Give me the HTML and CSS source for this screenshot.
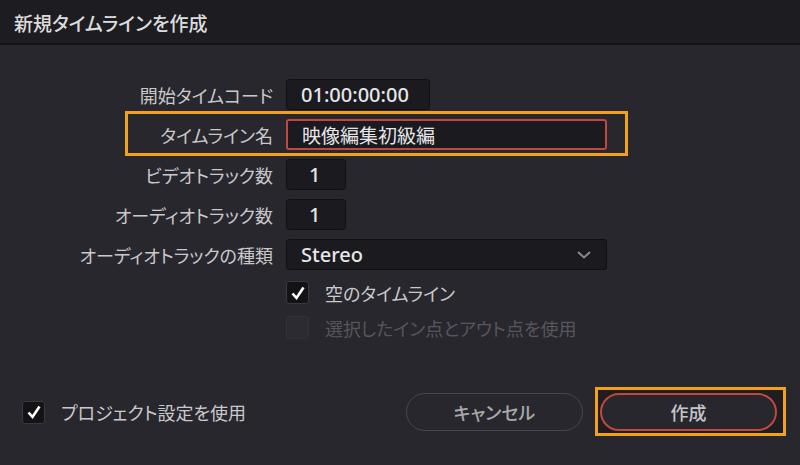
FILE: index.html
```html
<!DOCTYPE html>
<html lang="ja">
<head>
    <meta charset="UTF-8">
    <title>新規タイムラインを作成</title>
    <link rel="stylesheet" href="styles.css">
</head>
<body>

    <div class="titlebar">新規タイムラインを作成</div>

    <div class="form">
        <div class="row">
            <label class="label">開始タイムコード</label>
            <div class="field field-code">01:00:00:00</div>
        </div>

        <div class="row">
            <div class="mark mark-name"></div>
            <label class="label">タイムライン名</label>
            <div class="field field-name">映像編集初級編</div>
        </div>

        <div class="row">
            <label class="label">ビデオトラック数</label>
            <div class="field field-num">1</div>
        </div>

        <div class="row">
            <label class="label">オーディオトラック数</label>
            <div class="field field-num">1</div>
        </div>

        <div class="row">
            <label class="label">オーディオトラックの種類</label>
            <div class="field field-select">
                <span>Stereo</span>
                <svg class="chevron" width="14" height="8" viewBox="0 0 14 8">
                    <path d="M1 1 L7 6.5 L13 1" fill="none" stroke="#8a8a8e" stroke-width="2"/>
                </svg>
            </div>
        </div>

        <div class="check-row">
            <span class="box checked">
                <svg width="16" height="16" viewBox="0 0 16 16">
                    <path d="M2.5 8.5 L6.5 13 L13.5 2.5" fill="none" stroke="#fff" stroke-width="2.6"/>
                </svg>
            </span>
            <span class="check-text">空のタイムライン</span>
        </div>

        <div class="check-row disabled">
            <span class="box"></span>
            <span class="check-text">選択したイン点とアウト点を使用</span>
        </div>
    </div>

    <div class="footer">
        <div class="check-row footer-check">
            <span class="box checked">
                <svg width="16" height="16" viewBox="0 0 16 16">
                    <path d="M2.5 8.5 L6.5 13 L13.5 2.5" fill="none" stroke="#fff" stroke-width="2.6"/>
                </svg>
            </span>
            <span class="check-text">プロジェクト設定を使用</span>
        </div>

        <div class="buttons">
            <button class="btn btn-cancel">キャンセル</button>
            <div class="btn-wrap">
                <div class="mark mark-create"></div>
                <button class="btn btn-create">作成</button>
            </div>
        </div>
    </div>

</body>
</html>
```

FILE: styles.css
```css
body {
    margin: 0;
    width: 800px;
    height: 465px;
    overflow: hidden;
    background-color: #28272e;
    font-family: "Noto Sans CJK JP", "Noto Sans", sans-serif;
    font-feature-settings: "palt";
    color: #c9c9cb;
}

.titlebar {
    height: 45px;
    display: flex;
    align-items: center;
    padding-left: 14px;
    padding-top: 2px;
    box-sizing: border-box;
    background-color: #1d1c21;
    border-bottom: 2px solid #131216;
    font-size: 19px;
    font-weight: 500;
    color: #dcdcde;
}

.form {
    padding-top: 34px;
}

.row {
    position: relative;
    display: flex;
    align-items: center;
    height: 31px;
    margin-bottom: 9px;
}

.label {
    width: 273px;
    text-align: right;
    font-size: 18px;
    margin-right: 13px;
}

.field {
    box-sizing: border-box;
    height: 31px;
    display: flex;
    align-items: center;
    padding-left: 14px;
    background-color: #1b1a1f;
    border: 1px solid #111013;
    border-radius: 3px;
    font-family: "Noto Sans", "Noto Sans CJK JP", sans-serif;
    font-size: 20px;
    font-weight: 500;
    color: #e6e6e8;
}

.field-code {
    width: 144px;
}

.field-name {
    width: 321px;
    border: 2px solid #c0483f;
    font-family: "Noto Sans CJK JP", sans-serif;
    font-size: 19px;
    font-weight: 400;
}

.field-num {
    width: 60px;
    padding-left: 22px;
}

.field-select {
    width: 321px;
    justify-content: space-between;
    padding-right: 15px;
}

.mark {
    position: absolute;
    box-sizing: border-box;
    border: 3px solid #f2a11b;
}

.mark-name {
    left: 125px;
    top: -8px;
    width: 503px;
    height: 45px;
}

.check-row {
    display: flex;
    align-items: center;
    height: 23px;
    margin-left: 286px;
    margin-top: 11px;
}

.check-row.disabled {
    margin-top: 12px;
}

.box {
    box-sizing: border-box;
    width: 23px;
    height: 23px;
    display: flex;
    align-items: center;
    justify-content: center;
    border-radius: 3px;
    background-color: #2c2b31;
    border: 1px solid #323137;
}

.box.checked {
    background-color: #131215;
    border-color: #3a393f;
}

.check-text {
    margin-left: 16px;
    font-size: 18px;
}

.disabled .check-text {
    color: #57565c;
}

.footer {
    display: flex;
    justify-content: space-between;
    align-items: center;
    margin-top: 54px;
    padding: 0 23px 0 22px;
}

.footer-check {
    margin: 0;
}

.buttons {
    display: flex;
    gap: 17px;
}

.btn-wrap {
    position: relative;
}

.mark-create {
    left: -5px;
    top: -6px;
    right: -9px;
    bottom: -5px;
    background-color: #1e1d22;
}

.btn {
    position: relative;
    box-sizing: border-box;
    width: 177px;
    height: 38px;
    border-radius: 19px;
    background-color: #28272e;
    font-family: "Noto Sans CJK JP", sans-serif;
    font-feature-settings: "palt";
    font-size: 18px;
    font-weight: 500;
    cursor: pointer;
}

.btn-cancel {
    border: 1.5px solid #47464c;
    color: #a9a9ac;
}

.btn-create {
    border: 2px solid #c0483f;
    color: #c6c6c8;
}
```
